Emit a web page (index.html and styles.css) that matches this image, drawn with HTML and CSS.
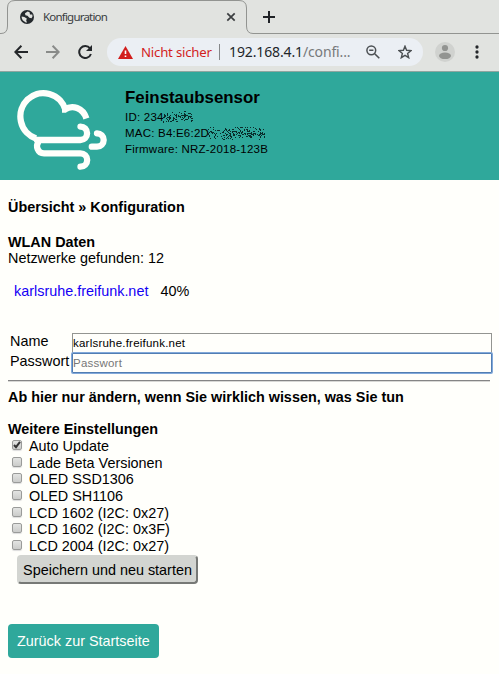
FILE: index.html
```html
<!DOCTYPE html>
<html lang="de">
<head>
<meta charset="utf-8">
<title>Konfiguration</title>
<link rel="stylesheet" href="styles.css">
</head>
<body>
<div class="browser">
  <div class="tabstrip">
    <svg class="tabshape" width="499" height="34" viewBox="0 0 499 34"><path d="M0 33.5H1Q7.500 33.500 7.500 26V8Q7.500 .5 15 .5H239Q246.500 .5 246.500 8V26Q246.500 33.500 253 33.500H499" fill="none" stroke="#929491"/></svg>
    <svg class="globe" width="14" height="14" viewBox="0 0 14 14"><circle cx="7" cy="7" r="7" fill="#24292d"/><path d="M7.700 1.500 5 3.300 5.400 5.300 7.500 5.700 9.300 7.800 11.500 8.200 12.500 6.500 12.300 4.600 10 4.400 9.600 2.300ZM1.700 6.500 4.300 7 6.800 8.500 6.200 10.500 7 12.600 5.700 12.600 2.700 10.300 1.700 8Z" fill="#e1e3e0"/></svg>
    <span class="tabtitle">Konfiguration</span>
    <svg class="close" width="10" height="10" viewBox="0 0 10 10"><path d="m1.300 1.300 7.400 7.400m0-7.400-7.400 7.400" stroke="#3b3e40" stroke-width="1.700"/></svg>
    <svg class="plus" width="12" height="12" viewBox="0 0 12 12"><path d="M6 0v12M0 6h12" stroke="#202327" stroke-width="2"/></svg>
  </div>
  <div class="toolbar">
    <svg class="back" width="14" height="14" viewBox="0 0 14 14"><path d="M7.400 .8 1.300 7l6.100 6.200M1.500 7H14" fill="none" stroke="#24272a" stroke-width="2"/></svg>
    <svg class="forward" width="14" height="14" viewBox="0 0 14 14"><path d="m6.600.8 6.100 6.200-6.100 6.200M12.500 7H0" fill="none" stroke="#898b89" stroke-width="2"/></svg>
    <svg class="reload" width="15" height="14" viewBox="0 0 15 14"><path d="M12 3.400A6 6 0 1 0 12.900 9" fill="none" stroke="#24272a" stroke-width="2"/><path d="M14 0v6H8Z" fill="#24272a"/></svg>
    <div class="address">
      <svg class="warning" width="15" height="13" viewBox="0 0 15 13"><path d="M7.500 0 15 13H0Z" fill="#d21d1c"/><path d="M7.500 4.500V8M7.500 9.500V11" stroke="#fff" stroke-width="1.600"/></svg>
      <span class="unsafe">Nicht sicher</span>
      <span class="divider"></span>
      <span class="url">192.168.4.1<span class="path">/confi...</span></span>
      <svg class="zoomicon" width="14" height="14" viewBox="0 0 14 14"><circle cx="5.300" cy="5.300" r="4.400" fill="none" stroke="#4c5053" stroke-width="1.500"/><path d="m8.700 8.700 4.600 4.500M3.200 5.300h4.200" stroke="#4c5053" stroke-width="1.600"/></svg>
      <svg class="star" width="14" height="14" viewBox="0 0 14 14"><path d="m7 1.200 1.600 4.100 4.400.3-3.400 2.800 1.100 4.300L7 10.300l-3.700 2.400 1.100-4.300L1 5.600l4.400-.3Z" fill="none" stroke="#4c5053" stroke-width="1.400"/></svg>
    </div>
    <svg class="avatar" width="20" height="20" viewBox="0 0 20 20"><circle cx="10" cy="10" r="10" fill="#d0d2cf"/><circle cx="10" cy="6" r="3.100" fill="#929491"/><ellipse cx="10" cy="13.800" rx="6" ry="3.300" fill="#929491"/></svg>
    <svg class="menu" width="4" height="14" viewBox="0 0 4 14"><g fill="#24272a"><circle cx="2" cy="2" r="1.650"/><circle cx="2" cy="7" r="1.650"/><circle cx="2" cy="12" r="1.650"/></g></svg>
  </div>
</div>
<header class="banner">
  <svg class="logo" width="92" height="82" viewBox="16 89 92 82"><g fill="none" stroke="#fffffb" stroke-width="6.300"><path d="M65.500 110A23 23.300 0 1 0 36 138.500M62 109.500 65 109.500C72 104.500 83 107.500 86.400 118.500"/><path d="M37 140H80.500A6.600 6.700 0 1 0 80.500 126.600M38.500 141.500C35.500 146 37.500 153.300 44 153.300H80.500A6.700 6.700 0 0 1 80.500 166.700M97 133.300A6.700 6.700 0 0 1 97 146.700H91.800" stroke-linecap="round"/></g></svg>
  <div class="device">
    <h1>Feinstaubsensor</h1>
    <p>ID: 234<svg class="speckle" width="30" height="16" data-seed="37" data-count="120"></svg></p>
    <p>MAC: B4:E6:2D<svg class="speckle" width="57" height="16" data-seed="91" data-count="210"></svg></p>
    <p>Firmware: NRZ-2018-123B</p>
  </div>
</header>
<main>
  <div class="crumbs"><b>Übersicht » Konfiguration</b></div>
  <section class="wlan">
    <b>WLAN Daten</b>
    <div>Netzwerke gefunden: 12</div>
  </section>
  <div class="network"><a>karlsruhe.freifunk.net</a><span>40%</span></div>
  <div class="fields">
    <label for="ssid">Name</label><input id="ssid" value="karlsruhe.freifunk.net">
    <label for="pwd">Passwort</label><input id="pwd" class="focused" placeholder="Passwort">
  </div>
  <div class="rule"></div>
  <div class="notice"><b>Ab hier nur ändern, wenn Sie wirklich wissen, was Sie tun</b></div>
  <b class="more">Weitere Einstellungen</b>
  <div class="options">
    <label><span class="box"><svg width="10" height="10" viewBox="0 0 10 10"><path d="m2 5 2 2.200L8 1.800" fill="none" stroke="#343434" stroke-width="2"/></svg></span>Auto Update</label>
    <label><span class="box"></span>Lade Beta Versionen</label>
    <label><span class="box"></span>OLED SSD1306</label>
    <label><span class="box"></span>OLED SH1106</label>
    <label><span class="box"></span>LCD 1602 (I2C: 0x27)</label>
    <label><span class="box"></span>LCD 1602 (I2C: 0x3F)</label>
    <label><span class="box"></span>LCD 2004 (I2C: 0x27)</label>
  </div>
  <button class="save">Speichern und neu starten</button>
  <a class="home">Zurück zur Startseite</a>
</main>
<script src="speckle.js"></script>
</body>
</html>
```
FILE: styles.css
```css
* { box-sizing: border-box; }
body {
  margin: 0;
  width: 499px;
  height: 674px;
  overflow: hidden;
  background: #fffffb;
  color: #000;
  font: 14.4px/16.6px "Liberation Sans", Arial, sans-serif;
}
svg { display: block; flex: none; }
.browser { height: 72px; background: #e1e3e0; border-bottom: 1px solid #8fa5a0; font-family: "Noto Sans", sans-serif; }
.tabstrip { height: 34px; display: flex; align-items: center; padding-left: 20px; position: relative; }
.tabshape { position: absolute; left: 0; top: 0; }
.tabtitle { font-size: 11.5px; color: #393d40; margin-left: 9px; width: 183px; letter-spacing: -.8px; }
.plus { margin-left: 27px; }
.toolbar { height: 37px; display: flex; align-items: center; padding: 0 0 1px 14px; }
.forward { margin-left: 18px; }
.reload { margin-left: 18px; }
.address { width: 316px; height: 28px; margin-left: 14px; border-radius: 14px; background: #ebeff4; display: flex; align-items: center; padding-left: 11px; font-size: 14px; white-space: nowrap; }
.unsafe { color: #d21d1c; margin-left: 8px; width: 71px; font-size: 13.2px; letter-spacing: -.2px; }
.divider { width: 1px; height: 16px; background: #858789; margin: 0 9px 0 7px; }
.url { width: 123px; color: #22262a; letter-spacing: -.13px; }
.path { color: #77797b; }
.zoomicon { margin-left: 14px; }
.star { margin-left: 18px; }
.avatar { margin-left: 12px; }
.menu { margin-left: 20px; }
.banner { height: 108px; background: #2fa89b; display: flex; padding: 17px 0 0 16px; }
.device { margin-left: 17px; }
h1 { font-size: 16.85px; line-height: 18px; margin: 0 0 2px; }
.device p { margin: 0; height: 16px; font-size: 11.5px; letter-spacing: .22px; line-height: 16px; display: flex; }
.speckle { margin-left: -1px; }
main { display: flex; flex-direction: column; align-items: flex-start; padding: 18.500px 0 0 8px; }
.crumbs { height: 35px; }
.wlan { height: 49px; }
.wlan div { line-height: 16px; }
.network { display: flex; gap: 12px; padding-left: 6px; height: 50.500px; }
a { color: #1500f5; }
.fields { display: grid; grid-template-columns: 62px 420px; grid-auto-rows: 20px; padding-left: 2px; }
.fields label { line-height: 17px; }
input { width: 420px; height: 20px; margin: 0; border: 1px solid #939591; padding: 1px 1px 1px 0; background: #fffffb; font: 11.5px "Liberation Sans", Arial, sans-serif; letter-spacing: .22px; outline: 0; color: #000; border-radius: 0; }
.focused { border-color: #527eb3; box-shadow: 0 0 0 1px #82a9da; border-radius: 1px; }
input::placeholder { color: #777; opacity: 1; }
.rule { width: 482px; height: 2px; border-top: 1px solid #858585; border-bottom: 1px solid #d8d8d5; margin: 7px 0; }
.notice { height: 32px; }
.more { height: 17px; }
.options { display: grid; grid-auto-rows: 16.650px; }
.options label { display: flex; align-items: flex-start; height: 16.650px; }
.box { width: 10px; height: 10px; margin: 2px 7px 0 4px; border: 1px solid #9a9b99; border-radius: 2px; background: linear-gradient(#e3e4e2, #cbccca); box-shadow: 0 1px 1px #ddd; }
.box svg { margin: -1px; }
.save { margin: 1px 0 0 9px; width: 181px; height: 29px; border: 2px solid; border-radius: 4px; border-color: #d3d5d1 #777976 #777976 #d3d5d1; background: #d3d5d1; padding: 0; font: 14.4px "Liberation Sans", Arial, sans-serif; color: #000; }
.home { margin-top: 40px; width: 151px; height: 34px; padding-left: 9px; border-radius: 4px; background: #2fa89b; color: #fffffb; line-height: 34px; }
```
FILE: speckle.js
```js
// Scatters fine dots over the masked part of an identifier.
document.querySelectorAll(".speckle").forEach((svg) => {
  let seed = Number(svg.dataset.seed) * 7919;
  const random = () => (seed = (seed * 16807) % 2147483647) / 2147483647;
  const width = svg.width.baseVal.value;
  let d = "";
  for (let i = 0; i < Number(svg.dataset.count); i++) {
    const x = Math.floor(random() * width);
    const y = Math.floor(1 + (random() + random()) * 7);
    d += `M${x} ${y}h1v1h-1z`;
  }
  const path = document.createElementNS("http://www.w3.org/2000/svg", "path");
  path.setAttribute("d", d);
  path.setAttribute("fill", "#092c2a");
  svg.append(path);
});
```
